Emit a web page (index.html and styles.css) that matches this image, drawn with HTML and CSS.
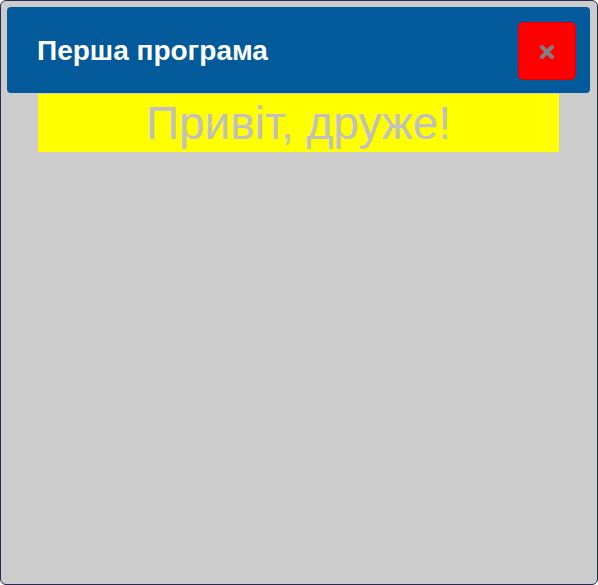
FILE: index.html
```html
<!DOCTYPE html>
<html lang="uk">
<head>
<meta charset="utf-8">
<title>Перша програма</title>
<link rel="stylesheet" href="styles.css">
</head>
<body>
<div class="dialog">
  <div class="titlebar">
    <span class="title">Перша програма</span>
    <button class="close" type="button" aria-label="close">
      <svg width="16" height="16" viewBox="0 0 16 16"><path d="M3 3 L13 13 M13 3 L3 13" stroke="#808080" stroke-width="4" stroke-linecap="round"/></svg>
    </button>
  </div>
  <div class="content">
    <div class="greeting">Привіт, друже!</div>
  </div>
</div>
</body>
</html>
```

FILE: styles.css
```css
html, body {
  margin: 0;
  padding: 0;
  background: #ffffff;
}
body {
  font-family: "Liberation Sans", Arial, sans-serif;
}
.dialog {
  box-sizing: border-box;
  width: 598px;
  height: 585px;
  border: 1px solid #2b2856;
  border-radius: 6px;
  background: #cccccc;
  padding: 6px 7px 6px 6px;
  display: flex;
  flex-direction: column;
}
.titlebar {
  height: 86px;
  background: #035a9b;
  border-radius: 4px;
  display: flex;
  align-items: center;
  justify-content: space-between;
  padding: 1px 14px 0 30px;
  box-sizing: border-box;
}
.title {
  color: #ffffff;
  font-weight: bold;
  font-size: 28px;
}
.close {
  width: 58px;
  height: 58px;
  background: #ff0000;
  border: 1px solid #e00000;
  border-radius: 5px;
  padding: 0;
  display: flex;
  align-items: center;
  justify-content: center;
  cursor: pointer;
}
.close svg {
  display: block;
  margin-top: 2px;
}
.content {
  padding: 1px 0 0 31px;
}
.greeting {
  width: 521px;
  height: 58px;
  background: #ffff00;
  color: #c0c0c0;
  font-size: 46px;
  line-height: 58px;
  text-align: center;
}
```
